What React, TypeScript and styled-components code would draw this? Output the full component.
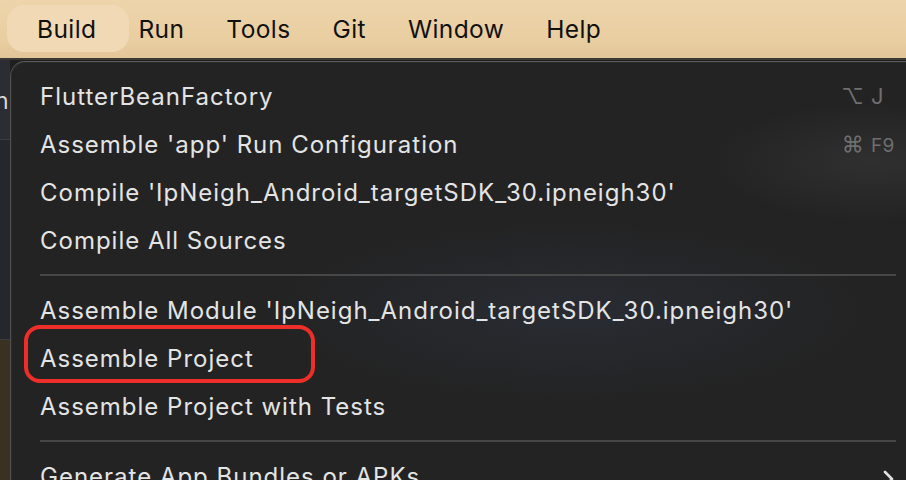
import styled, { createGlobalStyle } from "styled-components";

const Global = createGlobalStyle`
    html, body {
        margin: 0;
        padding: 0;
        background: #1f1f1f;
    }
    body {
        font-family: Inter, "Noto Sans", "Liberation Sans", sans-serif;
        -webkit-font-smoothing: antialiased;
    }
`;

const Screen = styled.div`
    width: 906px;
    height: 480px;
    overflow: hidden;
    display: flex;
    flex-direction: column;
    background: #1f1f1f;
`;

const MenuBar = styled.div`
    height: 60px;
    flex-shrink: 0;
    display: flex;
    align-items: center;
    padding: 0 16px 1px 16px;
    background: linear-gradient(180deg, #edd4aa 0%, #e9cea1 70%, #e2c598 100%);
    border-bottom: 2px solid #3a3936;
    box-sizing: border-box;
`;

const BarItem = styled.div<{ active?: boolean }>`
    position: relative;
    height: 47px;
    display: flex;
    align-items: center;
    padding: 0 21px;
    font-size: 24.5px;
    color: #111;
    letter-spacing: 0.4px;

    &::before {
        content: "";
        display: ${({ active }) => (active ? "block" : "none")};
        position: absolute;
        top: 0;
        bottom: 0;
        left: -9px;
        right: -12px;
        border-radius: 17px;
        background: #f0d9b4;
        z-index: 0;
    }

    span {
        position: relative;
    }
`;

const Body = styled.div`
    flex: 1;
    display: flex;
    min-height: 0;
`;

const SideStrip = styled.div`
    width: 10px;
    flex-shrink: 0;
    display: flex;
    flex-direction: column;
    overflow: hidden;
`;

const StripPart = styled.div<{ tone: string; h?: number }>`
    background: ${({ tone }) => tone};
    height: ${({ h }) => (h ? `${h}px` : "auto")};
    flex: ${({ h }) => (h ? "none" : 1)};
    color: #d8d8d8;
    font-size: 23px;
    line-height: 1;
    padding-top: ${({ h }) => (h === 80 ? "30px" : "0")};
    box-sizing: border-box;
    white-space: nowrap;
    text-indent: -5px;
    border-bottom: ${({ h }) => (h ? "1px solid #3a3c42" : "none")};
`;

const Panel = styled.div`
    flex: 1;
    margin-top: 1px;
    border-top-left-radius: 15px;
    border-top: 1px solid #5a5a5a;
    border-left: 1px solid #4f4f4f;
    background:
        radial-gradient(ellipse 300px 90px at 560px 250px, rgba(50, 60, 80, 0.35), transparent),
        radial-gradient(ellipse 160px 60px at 860px 100px, rgba(60, 60, 60, 0.5), transparent),
        #232323;
    padding: 10px 0 0 0;
    box-shadow: inset 1px 1px 0 rgba(255, 255, 255, 0.04);
`;

const Item = styled.div<{ marked?: boolean }>`
    position: relative;
    height: 48px;
    display: flex;
    align-items: center;
    padding-left: 29px;
    padding-right: 6px;
    font-size: 24px;
    color: #e4e4e4;
    letter-spacing: 0.99px;

    &::after {
        content: "";
        display: ${({ marked }) => (marked ? "block" : "none")};
        position: absolute;
        left: 13px;
        top: -9px;
        width: 291px;
        height: 58px;
        box-sizing: border-box;
        border: 4px solid #ee2f29;
        border-radius: 16px;
    }
`;

const Label = styled.span`
    flex: 1;
    white-space: nowrap;
`;

const Shortcut = styled.span`
    display: flex;
    color: #6f6f6f;
    font-size: 22px;
    letter-spacing: 0.3px;
`;

const Mod = styled.span`
    width: 30px;
    text-align: right;
`;

const Key = styled.span`
    width: 36px;
    padding-left: 7px;
    box-sizing: border-box;
`;

const Small = styled.span`
    font-size: 19px;
`;

const Separator = styled.div`
    height: 22px;
    display: flex;
    align-items: center;
    padding: 0 10px 0 29px;

    &::before {
        content: "";
        flex: 1;
        height: 2px;
        background: #474747;
    }
`;

const Chevron = styled.svg`
    width: 14px;
    height: 20px;
    margin-right: 4px;
    margin-top: 6px;
`;

const App = () => {
    return (
        <>
            <Global />
            <Screen>
                <MenuBar>
                    <BarItem active><span>Build</span></BarItem>
                    <BarItem><span>Run</span></BarItem>
                    <BarItem><span>Tools</span></BarItem>
                    <BarItem><span>Git</span></BarItem>
                    <BarItem><span>Window</span></BarItem>
                    <BarItem><span>Help</span></BarItem>
                </MenuBar>
                <Body>
                    <SideStrip>
                        <StripPart tone="#2b2d32" h={80}>n</StripPart>
                        <StripPart tone="#25272c" h={200} />
                        <StripPart tone="#3a3123" />
                    </SideStrip>
                    <Panel>
                        <Item>
                            <Label>FlutterBeanFactory</Label>
                            <Shortcut>
                                <Mod>⌥</Mod>
                                <Key>J</Key>
                            </Shortcut>
                        </Item>
                        <Item>
                            <Label>Assemble 'app' Run Configuration</Label>
                            <Shortcut>
                                <Mod>⌘</Mod>
                                <Key><Small>F9</Small></Key>
                            </Shortcut>
                        </Item>
                        <Item>
                            <Label>Compile 'IpNeigh_Android_targetSDK_30.ipneigh30'</Label>
                        </Item>
                        <Item>
                            <Label>Compile All Sources</Label>
                        </Item>
                        <Separator />
                        <Item>
                            <Label>Assemble Module 'IpNeigh_Android_targetSDK_30.ipneigh30'</Label>
                        </Item>
                        <Item marked>
                            <Label>Assemble Project</Label>
                        </Item>
                        <Item>
                            <Label>Assemble Project with Tests</Label>
                        </Item>
                        <Separator />
                        <Item>
                            <Label>Generate App Bundles or APKs</Label>
                            <Chevron viewBox="0 0 14 20">
                                <path d="M3 3 L10 10 L3 17" fill="none" stroke="#e0e0e0" strokeWidth="2.6" strokeLinecap="round" strokeLinejoin="round" />
                            </Chevron>
                        </Item>
                    </Panel>
                </Body>
            </Screen>
        </>
    );
};

export default App;
